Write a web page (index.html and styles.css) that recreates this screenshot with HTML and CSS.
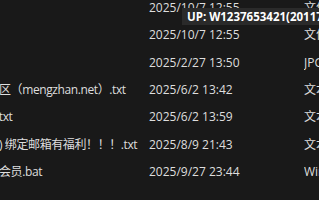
FILE: index.html
```html
<!DOCTYPE html>
<html lang="zh-CN">
<head>
<meta charset="utf-8">
<title>文件列表</title>
<link rel="stylesheet" href="styles.css">
</head>
<body>
<div class="list">
  <div class="row"><span class="name"></span><span class="date">2025/10/7 12:55</span><span class="type">文件夹</span></div>
  <div class="row"><span class="name"></span><span class="date">2025/10/7 12:55</span><span class="type">文件夹</span></div>
  <div class="row"><span class="name"></span><span class="date">2025/2/27 13:50</span><span class="type">JPG 文件</span></div>
  <div class="row"><span class="name cut-1">区（mengzhan.net）.txt</span><span class="date">2025/6/2 13:42</span><span class="type">文本文档</span></div>
  <div class="row"><span class="name cut-4">.txt</span><span class="date">2025/6/2 13:59</span><span class="type">文本文档</span></div>
  <div class="row"><span class="name cut-1">) 绑定邮箱有福利！！！.txt</span><span class="date">2025/8/9 21:43</span><span class="type">文本文档</span></div>
  <div class="row"><span class="name cut-1">会员.bat</span><span class="date">2025/9/27 23:44</span><span class="type">Windows 批处理文件</span></div>
</div>
<div class="tooltip">UP: W1237653421(20117123456)</div>
</body>
</html>
```
FILE: styles.css
```css
html, body {
  margin: 0;
  padding: 0;
}
body {
  width: 319px;
  height: 200px;
  overflow: hidden;
  background: #191919;
  color: #dedede;
  font-family: "Open Sans", "Noto Sans CJK SC", sans-serif;
  font-size: 12px;
  position: relative;
}
.list {
  margin-top: -6px;
  display: flex;
  flex-direction: column;
}
.row {
  height: 27.33px;
  line-height: 27.33px;
  display: grid;
  grid-template-columns: 149px 155px 1fr;
  white-space: nowrap;
}
.name, .date, .type {
  overflow: hidden;
}
.name {
  letter-spacing: -0.4px;
}
.cut-1 { text-indent: -1px; }
.cut-4 { text-indent: -4px; }
.tooltip {
  position: absolute;
  left: 182px;
  top: 8px;
  height: 17px;
  line-height: 17px;
  padding: 0 5px;
  background: #2a2a2a;
  color: #ffffff;
  font-weight: 700;
  font-size: 11.5px;
  white-space: nowrap;
}
```
